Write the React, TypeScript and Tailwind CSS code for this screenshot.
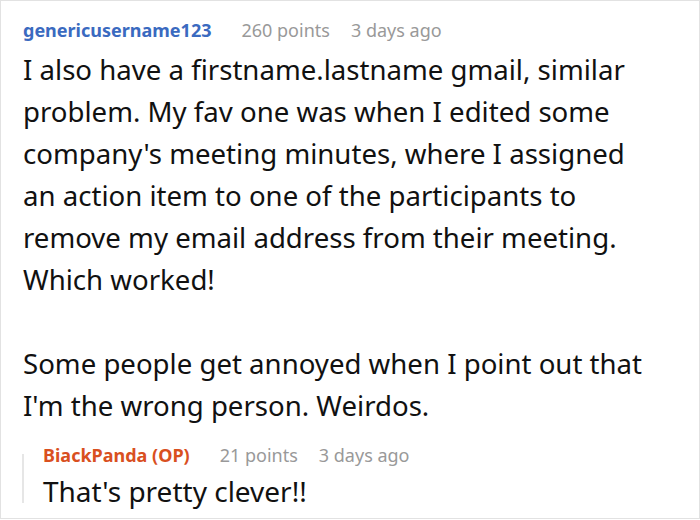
export default function App() {
  return (
    <div
      className="w-[700px] h-[519px] bg-white border border-[#e2e2e2] overflow-hidden"
      style={{ fontFamily: '"Noto Sans", "Open Sans", sans-serif' }}
    >
      <div className="pl-[22px] pr-[40px] pt-[16px]">
        <div className="flex items-baseline h-[31px] text-[18px] whitespace-nowrap">
          <span className="font-bold text-[#3a6ac0]">genericusername123</span>
          <span className="ml-[30px] text-[#999999]">260 points</span>
          <span className="ml-[21px] text-[#999999]">3 days ago</span>
        </div>
        <div className="text-[27.6px] leading-[42px] text-[#111111]">
          <p>I also have a firstname.lastname gmail, similar problem. My fav one was when I edited some company's meeting minutes, where I assigned an action item to one of the participants to remove my email address from their meeting. Which worked!</p>
          <p className="mt-[42px]">Some people get annoyed when I point out that I'm the wrong person. Weirdos.</p>
        </div>
        {/* reply */}
        <div className="flex -ml-px mt-[16px]">
          <div className="w-[2px] bg-[#e6e6e6] mt-[12px] mb-[9px]" />
          <div className="pl-[19px]">
            <div className="flex items-baseline h-[28px] text-[18px] whitespace-nowrap">
              <span className="font-bold text-[#d9501f]">BiackPanda (OP)</span>
              <span className="ml-[30px] text-[#999999]">21 points</span>
              <span className="ml-[21px] text-[#999999]">3 days ago</span>
            </div>
            <p className="text-[28px] leading-[42px] text-[#111111]">That's pretty clever!!</p>
          </div>
        </div>
      </div>
    </div>
  );
}
